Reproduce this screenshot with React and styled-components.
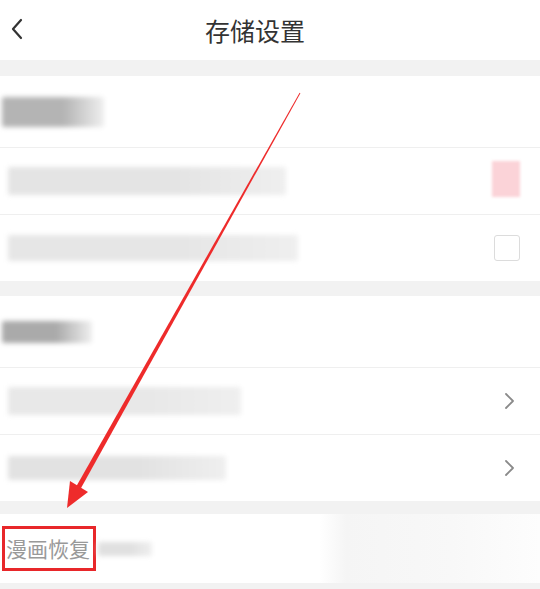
import React from 'react';
import styled, { createGlobalStyle } from 'styled-components';

const GlobalStyle = createGlobalStyle`
  html, body {
    margin: 0;
    padding: 0;
    background: #f2f2f2;
  }
  body {
    font-family: "Noto Sans CJK SC", "Noto Sans", sans-serif;
  }
`;

const App = () => {
  return (
    <>
      <GlobalStyle />
      <Page>
        <Header>
          <BackButton>
            <svg width="14" height="22" viewBox="0 0 14 22">
              <path d="M11 2 L3 11 L11 20" fill="none" stroke="#333" strokeWidth="2.2" strokeLinecap="round" strokeLinejoin="round" />
            </svg>
          </BackButton>
          <Title>存储设置</Title>
        </Header>

        <Gap h={16} />

        <Section>
          <HeadRow>
            <Blur w={102} h={30} tone="#b4b4b4" />
          </HeadRow>
          <Row>
            <Blur w={278} h={28} tone="#e4e4e4" />
            <PinkMark />
          </Row>
          <Row>
            <Blur w={290} h={26} tone="#e6e6e6" />
            <CheckBox />
          </Row>
        </Section>

        <Gap h={15} />

        <Section>
          <HeadRow>
            <Blur w={90} h={22} tone="#aaaaaa" />
          </HeadRow>
          <Row>
            <Blur w={233} h={28} tone="#e8e8e8" />
            <Chevron />
          </Row>
          <Row>
            <Blur w={218} h={24} tone="#e2e2e2" />
            <Chevron />
          </Row>
        </Section>

        <Gap h={13} />

        <LastRow>
          <Highlight>漫画恢复</Highlight>
          <Blur w={54} h={14} tone="#e0e0e0" />
          <Smudge />
        </LastRow>

        <Gap h={7} />

        <Arrow viewBox="0 0 540 589" width="540" height="589">
          <polygon
            points="300.4,93.2 299.6,92.8 76.5,485.9 80.9,488.3"
            fill="#ee2b2b"
          />
          <polygon points="67,508 70,481 88,492" fill="#ee2b2b" />
        </Arrow>
      </Page>
    </>
  );
};

const Chevron = () => (
  <ChevronBox>
    <svg width="12" height="18" viewBox="0 0 12 18">
      <path d="M2 2 L9 9 L2 16" fill="none" stroke="#8a8a8a" strokeWidth="1.8" strokeLinecap="round" strokeLinejoin="round" />
    </svg>
  </ChevronBox>
);

const Page = styled.div`
  position: relative;
  width: 540px;
  height: 589px;
  overflow: hidden;
  background: #f2f2f2;
`;

const Header = styled.div`
  position: relative;
  height: 60px;
  background: #fff;
  display: flex;
  align-items: center;
  justify-content: center;
`;

const BackButton = styled.div`
  position: absolute;
  left: 10px;
  top: 18px;
  display: flex;
`;

const Title = styled.div`
  font-size: 25px;
  color: #333;
  margin-right: 30px;
`;

const Gap = styled.div`
  height: ${p => p.h}px;
  background: #f2f2f2;
`;

const Section = styled.div`
  background: #fff;
  display: flex;
  flex-direction: column;
`;

const HeadRow = styled.div`
  height: 71px;
  display: flex;
  align-items: center;
  padding-left: 2px;
`;

const Row = styled.div`
  height: 66px;
  border-top: 1px solid #efefef;
  display: flex;
  align-items: center;
  justify-content: space-between;
  padding: 0 20px 0 8px;
`;

const Blur = styled.div`
  width: ${p => p.w}px;
  height: ${p => p.h}px;
  background: linear-gradient(90deg, ${p => p.tone} 0%, ${p => p.tone} 60%, #efefef 100%);
  filter: blur(2.5px);
  border-radius: 2px;
`;

const PinkMark = styled.div`
  width: 28px;
  height: 36px;
  margin-top: -4px;
  background: #fbd3d8;
  filter: blur(1.5px);
`;

const CheckBox = styled.div`
  width: 24px;
  height: 24px;
  border: 1.5px solid #dcdcdc;
  border-radius: 3px;
`;

const ChevronBox = styled.div`
  display: flex;
  margin-right: 4px;
`;

const LastRow = styled.div`
  position: relative;
  height: 69px;
  background: #fff;
  display: flex;
  align-items: center;
  padding-left: 2px;
`;

const Highlight = styled.span`
  font-size: 21px;
  color: #999;
  line-height: 1;
  padding: 9px 3px 9px 1px;
  border: 3px solid #e8272a;
  margin-right: 2px;
`;

const Smudge = styled.div`
  position: absolute;
  right: 0;
  top: 0;
  width: 220px;
  height: 100%;
  background: linear-gradient(90deg, rgba(244, 244, 244, 0) 0%, #f5f5f5 12%, #f8f8f8 60%, #fdfdfd 100%);
`;

const Arrow = styled.svg`
  position: absolute;
  left: 0;
  top: 0;
  pointer-events: none;
`;

export default App;
